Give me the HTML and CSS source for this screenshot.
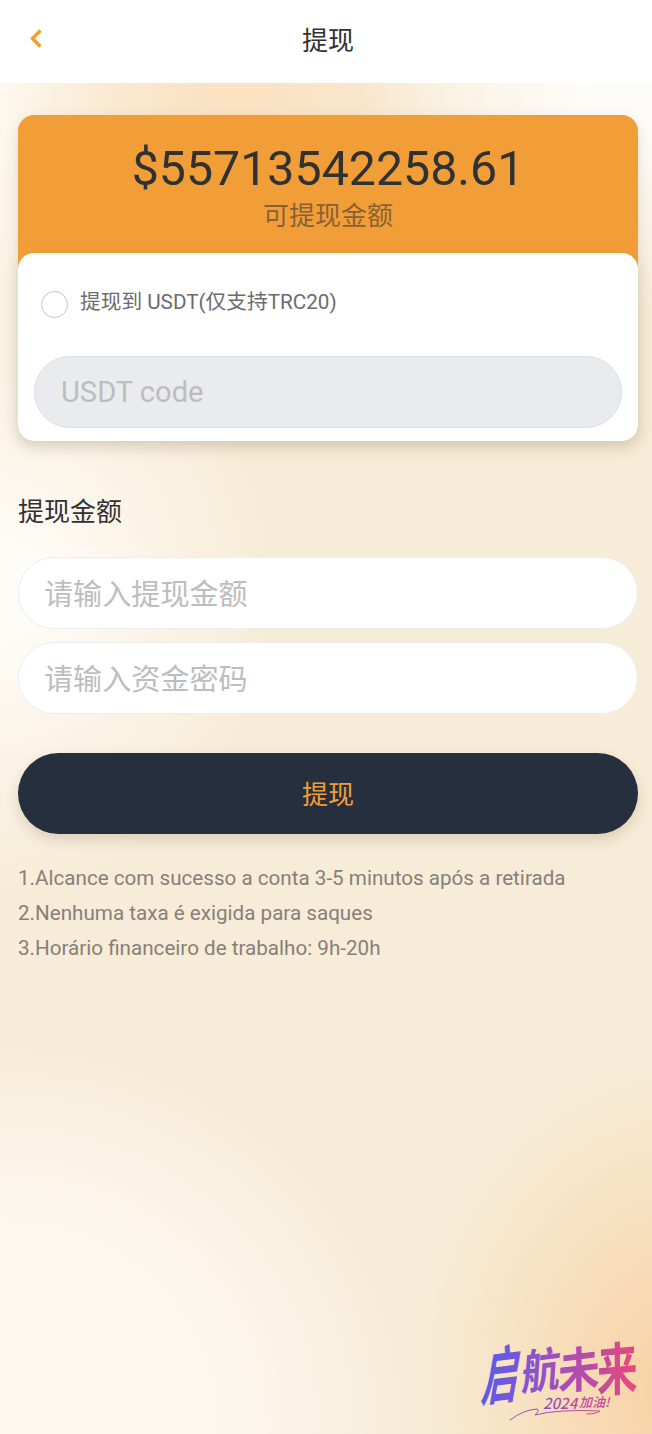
FILE: index.html
```
<!DOCTYPE html>
<html lang="zh-CN">
<head>
    <meta charset="UTF-8">
    <meta name="viewport" content="width=device-width, initial-scale=1.0">
    <title>提现</title>
    <link rel="stylesheet" href="styles.css">
</head>
<body>
    <header class="nav-bar">
        <a class="back" href="#" aria-label="返回">
            <svg width="14" height="20" viewBox="0 0 14 20">
                <path d="M11.5 1.5L3.5 9.5L11.5 17.5" fill="none" stroke="#f19e38" stroke-width="3.4"/>
            </svg>
        </a>
        <h1>提现</h1>
    </header>

    <main class="content">
        <section class="balance-card">
            <div class="balance">
                <p class="amount">$55713542258.61</p>
                <p class="caption">可提现金额</p>
            </div>
            <div class="method">
                <label class="radio">
                    <input type="radio" name="method">
                    <span>提现到 USDT(仅支持TRC20)</span>
                </label>
                <input class="field disabled" type="text" placeholder="USDT code" disabled>
            </div>
        </section>

        <h2>提现金额</h2>
        <input class="field" type="text" placeholder="请输入提现金额">
        <input class="field" type="text" placeholder="请输入资金密码">
        <button class="submit" type="button">提现</button>

        <div class="notes">
            <p>1.Alcance com sucesso a conta 3-5 minutos após a retirada</p>
            <p>2.Nenhuma taxa é exigida para saques</p>
            <p>3.Horário financeiro de trabalho: 9h-20h</p>
        </div>
    </main>

    <div class="slogan">
        <svg width="162" height="86" viewBox="0 0 162 86">
            <defs>
                <linearGradient id="ink1"><stop offset="0" stop-color="#5b5bea"/><stop offset="1" stop-color="#7a57d2"/></linearGradient>
                <linearGradient id="ink2"><stop offset="0" stop-color="#7d56d0"/><stop offset="1" stop-color="#a34fbb"/></linearGradient>
                <linearGradient id="ink3"><stop offset="0" stop-color="#a34fbb"/><stop offset="1" stop-color="#c04ba0"/></linearGradient>
                <linearGradient id="ink4"><stop offset="0" stop-color="#c04ba0"/><stop offset="1" stop-color="#ee467a"/></linearGradient>
                <linearGradient id="ink5"><stop offset="0" stop-color="#8352cc"/><stop offset="1" stop-color="#c8499a"/></linearGradient>
            </defs>
            <g class="big">
                <text fill="url(#ink1)" transform="translate(2 63) rotate(-7) skewX(-17) scale(0.92 1.56)">启</text>
                <text fill="url(#ink2)" transform="translate(43 52) rotate(-7) skewX(-11) scale(0.96 1.16)">航</text>
                <text fill="url(#ink3)" transform="translate(80 52) rotate(-7) skewX(-7) scale(1.05 1.2)">未</text>
                <text fill="url(#ink4)" transform="translate(119 54) rotate(-5) skewX(-5) scale(1.02 1.42)">来</text>
            </g>
            <g class="small">
                <text fill="url(#ink5)" x="65" y="71" font-size="15">2024</text>
                <text fill="#c04a9f" x="101" y="69" font-size="13">加油!</text>
            </g>
            <path d="M32 82Q45 72 59 71Q62 72 57 77Q80 71 122 73Q118 76 109 76" fill="none" stroke="url(#ink5)" stroke-width="1" stroke-linecap="round"/>
        </svg>
    </div>
</body>
</html>
```

FILE: styles.css
```
* {
    box-sizing: border-box;
}

body {
    display: flex;
    flex-direction: column;
    min-height: 1434px;
    margin: 0;
    font-family: Roboto, "Noto Sans CJK SC", sans-serif;
    color: #303133;
    background-color: #f7ecd7;
    background-image:
        radial-gradient(ellipse 270px 330px at 105% 97%, #f7d3a6 10%, rgba(247, 216, 176, 0.75) 45%, rgba(247, 226, 198, 0) 100%),
        radial-gradient(ellipse 400px 370px at 0 99%, #fcf8f0 50%, rgba(253, 245, 236, 0.85) 70%, rgba(248, 235, 217, 0) 100%),
        radial-gradient(ellipse 270px 300px at 0 590px, #fefcf6 15%, rgba(253, 246, 236, 0.75) 55%, rgba(249, 235, 218, 0) 100%),
        radial-gradient(ellipse 290px 240px at 100% 70px, #fefcf8 25%, rgba(254, 252, 248, 0) 100%),
        radial-gradient(ellipse 240px 260px at 240px 90px, #fae2c3 10%, rgba(250, 226, 195, 0) 100%),
        radial-gradient(ellipse 200px 400px at 0 80px, #fdf8ee 10%, rgba(253, 248, 238, 0) 100%);
}

h1, h2, p {
    margin: 0;
    font-weight: 400;
}

.nav-bar {
    display: grid;
    grid-template-columns: 60px 1fr 60px;
    align-items: center;
    height: 83px;
    padding: 0 0 6px 4px;
    background-color: #fff;
}

.back {
    display: flex;
    padding-left: 25px;
}

h1 {
    padding-top: 4px;
    text-align: center;
    font-size: 26px;
    line-height: 38px;
}

.content {
    display: flex;
    flex-direction: column;
    padding: 32px 14px 0 18px;
}

.balance-card {
    border-radius: 16px;
    background-color: #f19e38;
    box-shadow: 0 6px 16px rgba(110, 90, 60, 0.16);
}

.balance {
    height: 138px;
    padding-top: 25px;
    text-align: center;
}

.amount {
    font-size: 48.3px;
    line-height: 57px;
}

.caption {
    font-size: 26px;
    line-height: 38px;
    color: #303133;
    opacity: 0.55;
}

.method {
    height: 188px;
    padding: 37px 16px 0;
    border-radius: 16px;
    background-color: #fff;
    box-shadow: 0 4px 14px rgba(110, 90, 60, 0.12);
}

.radio {
    display: flex;
    gap: 12px;
    height: 66px;
    padding-left: 7px;
    font-size: 20.7px;
    line-height: 25px;
    color: #6b6b6d;
}

.radio input {
    appearance: none;
    width: 27px;
    height: 27px;
    margin: 1px 0 0;
    border: 1px solid #c0c4cc;
    border-radius: 50%;
}

.field {
    width: 100%;
    height: 72px;
    padding: 3px 26px 0 25px;
    border: 1px solid #ebedf0;
    border-radius: 36px;
    background-color: #fff;
    font-family: inherit;
    font-size: 29.1px;
    outline: none;
}

.field::placeholder {
    color: #bdbdbd;
    opacity: 1;
}

.field.disabled {
    padding: 0 26px;
    border-color: #dcdee1;
    background-color: #eaebef;
}

h2 {
    margin: 52px 0 26px;
    font-size: 26px;
    line-height: 38px;
}

.content > .field + .field {
    margin-top: 13px;
}

.submit {
    height: 81px;
    margin-top: 39px;
    padding-bottom: 3px;
    border: none;
    border-radius: 41px;
    background-color: #262f3e;
    box-shadow: 0 6px 14px rgba(110, 90, 60, 0.2);
    color: #f19e38;
    font-family: inherit;
    font-size: 26px;
}

.notes {
    margin-top: 27px;
    font-size: 20.63px;
    line-height: 35px;
    color: #86807a;
}

.slogan {
    display: flex;
    justify-content: flex-end;
    margin-top: auto;
    padding: 0 12px 10px 0;
}

.slogan svg {
    overflow: visible;
}

.slogan text {
    font-family: "Noto Sans CJK SC", sans-serif;
}

.slogan .big {
    font-size: 40px;
    font-weight: 700;
}

.slogan .small {
    font-style: italic;
    font-weight: 500;
}
```
